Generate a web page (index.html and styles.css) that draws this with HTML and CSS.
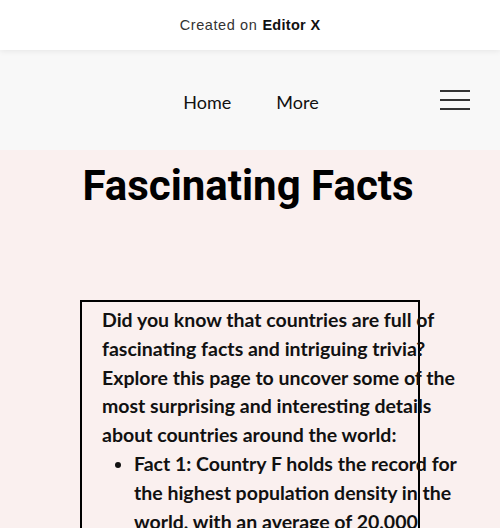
FILE: index.html
```html
<!DOCTYPE html>
<html>
<head>
<meta charset="utf-8">
<link rel="stylesheet" href="styles.css">
</head>
<body>
<div class="topbar">Created on <b>Editor X</b></div>
<header class="nav">
  <nav class="links"><a>Home</a><a>More</a></nav>
  <div class="burger"><span></span><span></span><span></span></div>
</header>
<main class="main">
  <h1 class="title">Fascinating Facts</h1>
  <div class="box">
    <div class="text">
      <p>Did you know that countries are full of fascinating facts and intriguing trivia? Explore this page to uncover some of the most surprising and interesting details about countries around the world:</p>
      <ul>
        <li>Fact 1: Country F holds the record for the highest population density in the world, with an average of 20,000 people per square kilometer.</li>
      </ul>
    </div>
  </div>
</main>
</body>
</html>
```
FILE: styles.css
```css
html, body { margin: 0; padding: 0; }
body { width: 500px; height: 528px; overflow: hidden; background: #faf0ef; }
.topbar {
  height: 50px; background: #fff; display: flex; align-items: center; justify-content: center;
  font-family: "Liberation Sans", Arial, sans-serif; font-size: 14.5px; color: #333; letter-spacing: 0.6px;
  box-shadow: 0 1px 6px rgba(0,0,0,0.08); position: relative; z-index: 1;
}
.topbar b { color: #111; margin-left: 5px; letter-spacing: 0.3px; }
.nav { height: 100px; background: #f8f8f8; position: relative; display: flex; align-items: center; justify-content: center; }
.links { display: flex; gap: 45px; padding-top: 4px; padding-left: 2px; }
.links a { font-family: "Lato", "Open Sans", sans-serif; font-size: 18px; color: #111; }
.burger { position: absolute; left: 440px; top: 40px; width: 30px; display: flex; flex-direction: column; gap: 7px; }
.burger span { display: block; height: 2px; background: #333; }
.main { padding-top: 13px; }
.title { margin: 0; text-align: center; font-family: Roboto, sans-serif; font-weight: 700; font-size: 42px; line-height: 46px; color: #000; padding-right: 4px; }
.box { margin: 91px 0 0 80px; width: 340px; height: 300px; border: 2px solid #000; padding: 4px 0 0 20px; box-sizing: border-box; }
.text { width: 362px; font-family: "Lato", sans-serif; font-weight: 700; font-size: 19.5px; line-height: 28.8px; color: #111; }
.text p { margin: 0; }
.text ul { margin: 0; padding-left: 32px; }
```
